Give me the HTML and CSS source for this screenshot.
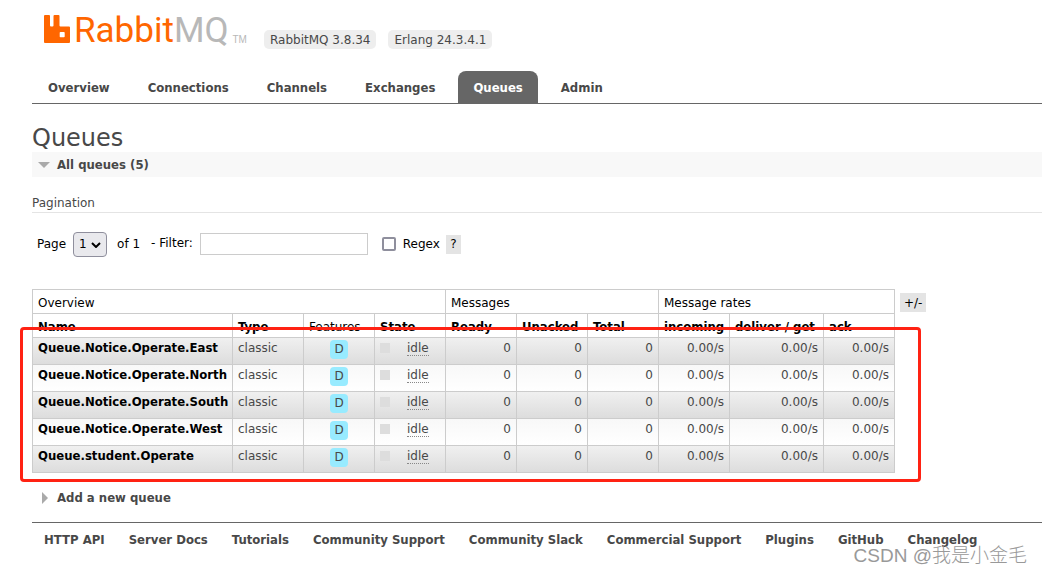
FILE: index.html
```html
<!DOCTYPE html>
<html lang="en">
<head>
    <meta charset="UTF-8">
    <title>RabbitMQ Management</title>
    <link rel="stylesheet" href="styles.css">
</head>
<body>
    <header>
        <div class="top">
            <a class="logo" href="#">
                <svg class="mark" viewBox="0 0 27 28" width="27" height="28" aria-hidden="true">
                    <path fill="#ff6600" fill-rule="evenodd" d="M1 0h4q1 0 1 1v9.500q0 1 1 1h1.500q1 0 1-1V1q0-1 1-1h4q1 0 1 1v9.500q0 1 1 1h8.500q1 0 1 1V27q0 1-1 1H1q-1 0-1-1V1q0-1 1-1zM16.500 17q-.8 0-.8.8v3.600q0 .8.800.8h3.400q.8 0 .8-.8v-3.600q0-.8-.8-.8z"/>
                </svg>
                <span class="rabbit">Rabbit</span><span class="mq">MQ</span><span class="tm">TM</span>
            </a>
            <span class="version">RabbitMQ 3.8.34</span>
            <span class="version">Erlang 24.3.4.1</span>
        </div>
        <nav class="tabs">
            <a href="#">Overview</a>
            <a href="#">Connections</a>
            <a href="#">Channels</a>
            <a href="#">Exchanges</a>
            <a class="selected" href="#">Queues</a>
            <a href="#">Admin</a>
        </nav>
    </header>

    <main>
        <h1>Queues</h1>
        <h2 class="section open">All queues (5)</h2>
        <h3>Pagination</h3>

        <form class="filter">
            <label for="page">Page</label>
            <span class="page-select">
                <select id="page"><option>1</option></select>
                <svg viewBox="0 0 10 6" width="10" height="6" aria-hidden="true"><path d="M1 1l4 4 4-4" fill="none" stroke="#000" stroke-width="2"/></svg>
            </span>
            <span class="of">of 1</span>
            <label class="filter-label" for="filter">- Filter:</label>
            <input type="text" id="filter">
            <input type="checkbox" id="regex">
            <label for="regex">Regex</label>
            <button type="button" class="help">?</button>
        </form>

        <div class="queues">
            <table>
                <colgroup>
                    <col class="col-name"><col><col><col><col><col><col><col><col class="col-get"><col>
                </colgroup>
                <thead>
                    <tr>
                        <th colspan="4">Overview</th>
                        <th colspan="3">Messages</th>
                        <th colspan="3">Message rates</th>
                    </tr>
                    <tr>
                        <th class="sort">Name</th>
                        <th class="sort">Type</th>
                        <th>Features</th>
                        <th class="sort">State</th>
                        <th class="sort">Ready</th>
                        <th class="sort">Unacked</th>
                        <th class="sort">Total</th>
                        <th class="sort">incoming</th>
                        <th class="sort">deliver / get</th>
                        <th class="sort">ack</th>
                    </tr>
                </thead>
                <tbody>
                    <tr>
                        <td><a href="#">Queue.Notice.Operate.East</a></td>
                        <td>classic</td>
                        <td class="c"><abbr class="feature">D</abbr></td>
                        <td><div class="state"><abbr>idle</abbr></div></td>
                        <td class="r">0</td><td class="r">0</td><td class="r">0</td>
                        <td class="r">0.00/s</td><td class="r">0.00/s</td><td class="r">0.00/s</td>
                    </tr>
                    <tr>
                        <td><a href="#">Queue.Notice.Operate.North</a></td>
                        <td>classic</td>
                        <td class="c"><abbr class="feature">D</abbr></td>
                        <td><div class="state"><abbr>idle</abbr></div></td>
                        <td class="r">0</td><td class="r">0</td><td class="r">0</td>
                        <td class="r">0.00/s</td><td class="r">0.00/s</td><td class="r">0.00/s</td>
                    </tr>
                    <tr>
                        <td><a href="#">Queue.Notice.Operate.South</a></td>
                        <td>classic</td>
                        <td class="c"><abbr class="feature">D</abbr></td>
                        <td><div class="state"><abbr>idle</abbr></div></td>
                        <td class="r">0</td><td class="r">0</td><td class="r">0</td>
                        <td class="r">0.00/s</td><td class="r">0.00/s</td><td class="r">0.00/s</td>
                    </tr>
                    <tr>
                        <td><a href="#">Queue.Notice.Operate.West</a></td>
                        <td>classic</td>
                        <td class="c"><abbr class="feature">D</abbr></td>
                        <td><div class="state"><abbr>idle</abbr></div></td>
                        <td class="r">0</td><td class="r">0</td><td class="r">0</td>
                        <td class="r">0.00/s</td><td class="r">0.00/s</td><td class="r">0.00/s</td>
                    </tr>
                    <tr>
                        <td><a href="#">Queue.student.Operate</a></td>
                        <td>classic</td>
                        <td class="c"><abbr class="feature">D</abbr></td>
                        <td><div class="state"><abbr>idle</abbr></div></td>
                        <td class="r">0</td><td class="r">0</td><td class="r">0</td>
                        <td class="r">0.00/s</td><td class="r">0.00/s</td><td class="r">0.00/s</td>
                    </tr>
                </tbody>
            </table>
            <button type="button" class="columns">+/-</button>
            <div class="highlight"></div>
        </div>

        <h2 class="section closed">Add a new queue</h2>
    </main>

    <footer>
        <a href="#">HTTP API</a>
        <a href="#">Server Docs</a>
        <a href="#">Tutorials</a>
        <a href="#">Community Support</a>
        <a href="#">Community Slack</a>
        <a href="#">Commercial Support</a>
        <a href="#">Plugins</a>
        <a href="#">GitHub</a>
        <a href="#">Changelog</a>
    </footer>
    <div class="watermark">CSDN @我是小金毛</div>
</body>
</html>
```
FILE: styles.css
```css
*, *::before {
    box-sizing: border-box;
}
body {
    margin: 0;
    padding-left: 32px;
    background: #fff;
    color: #484848;
    font: 12px/16px "DejaVu Sans", Verdana, sans-serif;
}
a {
    color: inherit;
    text-decoration: none;
}
input, select, button {
    font: inherit;
    color: #000;
    margin: 0;
}

/* header */
.top {
    display: flex;
    align-items: flex-start;
    height: 71px;
    padding: 10px 0 0 12px;
}
.logo {
    display: flex;
    width: 208px;
    margin-right: 12px;
    line-height: 42px;
    font-family: Roboto, sans-serif;
    font-size: 35px;
}
.mark {
    flex: none;
    margin: 5px 3px 0 0;
}
.rabbit {
    color: #ff6600;
}
.mq {
    color: #b8b8b8;
}
.tm {
    margin: 9px 0 0 4px;
    color: #b8b8b8;
    font-family: "Liberation Sans", Arial, sans-serif;
    font-size: 10px;
}
.version {
    margin: 20px 12px 0 0;
    padding: 2px 6px 1px;
    border-radius: 5px;
    background: #eee;
}
.tabs {
    display: flex;
    gap: 8px;
    padding-left: 1px;
    border-bottom: 1px solid #666;
}
.tabs a {
    height: 32px;
    padding: 9px 15px;
    border-radius: 8px 8px 0 0;
}
.tabs .selected {
    background: #666;
    color: #fff;
}
.tabs a, .section, .sort, td a, footer a {
    font-family: "DejaVu Sans Condensed", Verdana, sans-serif;
    font-size: 13px;
    font-weight: bold;
}

/* headings */
h1 {
    margin: 21px 0 0;
    font-size: 24px;
    line-height: 27px;
    font-weight: normal;
}
.section {
    display: flex;
    align-items: center;
    margin: 0;
    height: 25px;
    line-height: 25px;
    padding-left: 6px;
}
.section::before {
    content: "";
    width: 12px;
    margin-right: 7px;
    border: solid transparent;
}
.open {
    background: #f8f8f8;
}
.open::before {
    border-width: 6px 6px 0;
    border-top-color: #aaa;
}
.closed {
    padding-left: 10px;
    margin-top: 12px;
}
.closed::before {
    width: 6px;
    margin-right: 9px;
    border-width: 6px 0 6px 6px;
    border-left-color: #aaa;
}
h3 {
    margin: 18px 0;
    padding-bottom: 1px;
    border-bottom: 1px solid #e4e4e4;
    font-size: 12px;
    font-weight: normal;
}

/* filter */
.filter {
    display: flex;
    align-items: center;
    height: 26px;
    padding-left: 5px;
    color: #000;
}
.page-select {
    position: relative;
    margin: 0 10px 0 7px;
}
.page-select select {
    display: block;
    appearance: none;
    width: 34px;
    height: 25px;
    padding: 0 5px;
    border: 1px solid #8f8f9d;
    border-radius: 4px;
    background: #e9e9ed;
}
.page-select svg {
    position: absolute;
    right: 6px;
    top: 10px;
    pointer-events: none;
}
.of {
    margin-right: 11px;
}
.filter-label {
    padding-bottom: 2px;
    margin-right: 7px;
}
input[type=text] {
    width: 168px;
    height: 22px;
    border: 1px solid #ccc;
}
input[type=checkbox] {
    appearance: none;
    width: 14px;
    height: 14px;
    margin: 0 7px 0 14px;
    border: 2px solid #8f8f9d;
    border-radius: 2px;
    background: #fff;
}
.help, .columns {
    padding: 0 4px;
    height: 19px;
    border: 0;
    background: #e4e4e4;
}
.help {
    width: 15px;
    margin-left: 6px;
}

/* table */
.queues {
    position: relative;
    display: flex;
    align-items: flex-start;
    margin-top: 32px;
}
table {
    flex: none;
    width: 863px;
    table-layout: fixed;
    border-collapse: collapse;
}
.col-name {
    width: 200px;
}
.col-get {
    width: 94px;
}
th, td {
    height: 27px;
    padding: 2px 5px;
    border: 1px solid #ccc;
    text-align: left;
    vertical-align: top;
    white-space: nowrap;
}
th {
    height: 24px;
    padding: 5px 5px 2px;
    color: #000;
    font-weight: normal;
}
td a {
    color: #000;
}
tbody tr {
    background: linear-gradient(#f8f8f8, #fff);
}
tbody tr:nth-child(odd) {
    background: linear-gradient(#f0f0f0, #dcdcdc);
}
.c {
    text-align: center;
}
.r {
    text-align: right;
}
.feature {
    display: inline-block;
    padding: 1px 4px 2px;
    border-radius: 4px;
    background: #98ebff;
}
.state {
    display: flex;
    align-items: center;
}
.state::before {
    content: "";
    width: 10px;
    height: 10px;
    margin-right: 17px;
    background: #ddd;
}
.state abbr {
    padding-top: 1px;
    border-bottom: 1px dotted #888;
    line-height: 14px;
}
.columns {
    margin: 4px 0 0 5px;
}
.highlight {
    position: absolute;
    left: -12px;
    top: 38px;
    width: 901px;
    height: 155px;
    border: 3px solid #ff2213;
    border-radius: 4px;
    pointer-events: none;
}

/* footer */
footer {
    display: flex;
    gap: 24px;
    margin-top: 12px;
    padding: 9px 12px 0;
    border-top: 1px solid #666;
    white-space: nowrap;
}
.watermark {
    position: absolute;
    right: 15px;
    bottom: 7px;
    color: #999;
    font: 300 19px/24px "Liberation Sans", "Noto Sans CJK SC", sans-serif;
}
```
